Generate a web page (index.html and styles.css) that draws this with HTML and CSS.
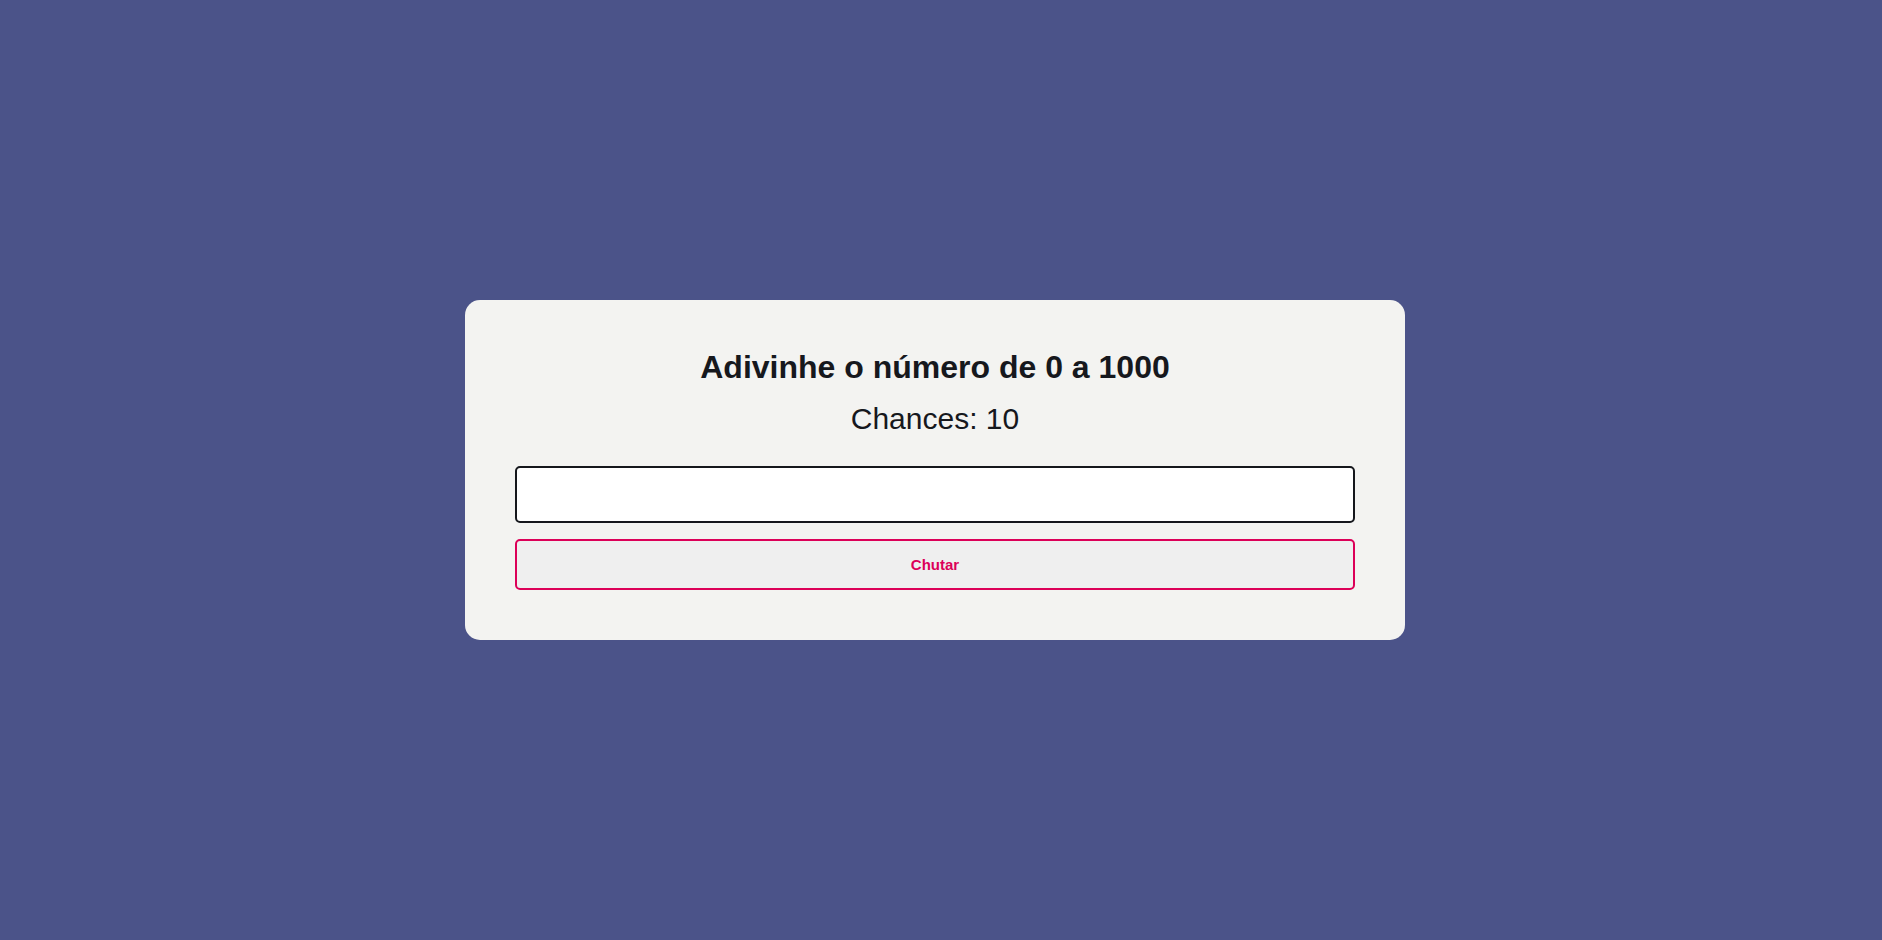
FILE: index.html
```html
<!DOCTYPE html>
<html lang="pt-BR">
<head>
<meta charset="utf-8">
<title>Adivinhe o número</title>
<link rel="stylesheet" href="styles.css">
</head>
<body>
<main class="page">
  <section class="card">
    <h1 class="title">Adivinhe o número de 0 a 1000</h1>
    <p class="chances">Chances: 10</p>
    <input class="guess" type="number" aria-label="Seu chute">
    <button class="btn" type="button">Chutar</button>
  </section>
</main>
</body>
</html>
```

FILE: styles.css
```css
html, body {
  margin: 0;
  padding: 0;
  height: 100%;
}
body {
  background: #4b5389;
  font-family: "Liberation Sans", Arial, sans-serif;
}
.page {
  box-sizing: border-box;
  height: 100%;
  display: flex;
  align-items: center;
  justify-content: center;
  padding-right: 12px;
}
.card {
  box-sizing: border-box;
  width: 940px;
  height: 340px;
  padding: 49px 50px 50px;
  background: #f3f3f1;
  border-radius: 15px;
  display: flex;
  flex-direction: column;
  align-items: stretch;
  text-align: center;
}
.title {
  margin: 0 0 16px;
  font-size: 32px;
  font-weight: 700;
  color: #16181d;
}
.chances {
  margin: 0 0 30px;
  font-size: 30px;
  color: #16181d;
}
.guess {
  box-sizing: border-box;
  height: 57px;
  width: 100%;
  margin: 0;
  border: 2px solid #15171c;
  border-radius: 5px;
  background: #ffffff;
  font-family: inherit;
  font-size: 20px;
  padding: 0 12px;
}
.btn {
  box-sizing: border-box;
  height: 51px;
  width: 100%;
  margin: 16px 0 0;
  border: 2px solid #dc0058;
  border-radius: 5px;
  background: #efefef;
  color: #dc0058;
  font-family: inherit;
  font-size: 15px;
  font-weight: 700;
  cursor: pointer;
}
```
